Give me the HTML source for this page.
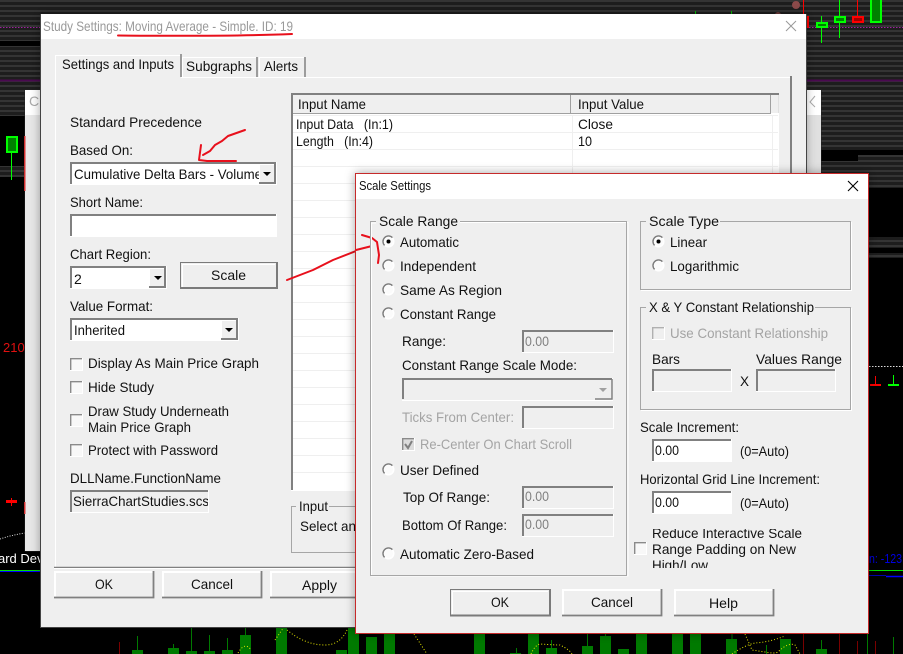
<!DOCTYPE html>
<html><head><meta charset="utf-8"><title>Scale Settings</title>
<style>
html,body{margin:0;padding:0;background:#000;overflow:hidden}
svg{display:block}
text{font-family:"Liberation Sans",sans-serif;font-size:14px;fill:#111}
.t13{font-size:13px}
.dis{fill:#a4a4a4}
.gr{fill:#808080}
.d{fill:none;stroke:#808080;stroke-width:2}
.l{fill:none;stroke:#fff;stroke-width:1}
.g{fill:none;stroke:#a6a6a6;stroke-width:1}
.gw{fill:none;stroke:#fff;stroke-width:1}
.btn{fill:#efefef}
.red{fill:none;stroke:#e8101c;stroke-width:2;stroke-linecap:round;stroke-linejoin:round}
.gb{fill:#007a00}
.gwk{stroke:#007a00;stroke-width:1;fill:none}
.rwk{stroke:#7a0000;stroke-width:1;fill:none}
.can{stroke:#00ff00;stroke-width:2;fill:#008000}
.canr{stroke:#ff0000;stroke-width:2;fill:#a00000}
</style></head>
<body>
<svg xmlns="http://www.w3.org/2000/svg" width="903" height="654" viewBox="0 0 903 654">
<defs>
<pattern id="st" width="4" height="5" patternUnits="userSpaceOnUse"><rect width="4" height="5" fill="#1d1d1d"/><rect y="0" width="4" height="2" fill="#343434"/></pattern>
<filter id="sh" x="-10%" y="-10%" width="120%" height="120%"><feDropShadow dx="0" dy="0" stdDeviation="5" flood-color="#000" flood-opacity=".35"/></filter>
<clipPath id="c1"><rect x="72" y="164" width="187" height="20"/></clipPath>
<clipPath id="c2"><rect x="72" y="492" width="136" height="20"/></clipPath>
<clipPath id="c3"><rect x="650" y="529" width="170" height="39"/></clipPath>
<g id="r"><circle r="6" fill="#fff"/><circle r="4.5" fill="#fbfbfb"/><path d="M-3.9 3.900A5.500 5.500 0 0 1 3.900 -3.900" stroke="#7c7c7c" stroke-width="1.400" fill="none"/></g>
<g id="c"><rect width="12" height="12" fill="#f8f8f8"/><path d="M.7 12V.7H12" stroke="#8a8a8a" stroke-width="1.400" fill="none"/><path d="M12.500 0V12.500H0" stroke="#fff" fill="none"/></g>
</defs>

<!-- chart background -->
<rect width="903" height="654" fill="#000"/>
<rect x="0" y="0" width="903" height="41" fill="url(#st)"/>
<rect x="0" y="46" width="40" height="70" fill="url(#st)"/>
<rect x="806" y="41" width="97" height="109" fill="url(#st)"/>
<rect x="858" y="155" width="45" height="33" fill="url(#st)"/>
<rect x="821" y="161" width="82" height="27" fill="url(#st)"/>
<rect x="868" y="237" width="35" height="11" fill="url(#st)"/>
<rect x="868" y="253" width="35" height="5" fill="url(#st)"/>
<rect x="0" y="166" width="25" height="11" fill="url(#st)"/>
<path d="M0 27.500H40M806 27.500H903" stroke="#a020a0" stroke-width="1" stroke-dasharray="1.500 1.500"/>
<path d="M0 80.500H40M806 80.500H903" stroke="#4a0a50" stroke-width="2"/>
<!-- left candle -->
<path d="M11.500 153V180" stroke="#00ff00" stroke-width="1"/>
<rect x="7" y="137" width="10" height="15" class="can"/>
<path d="M6 501.500H17" stroke="#ff0000" stroke-width="3" fill="none"/><path d="M11.500 498V506" stroke="#ff0000" fill="none"/>
<text x="3" y="352" style="font-size:13px;fill:#e01010">2109</text>
<path d="M0 539Q12 535 25 533" stroke="#ddd" stroke-width="1" stroke-dasharray="1 1.500" fill="none"/>
<text x="-2" y="563" style="fill:#fff;font-size:13px">ard Dev</text>
<path d="M0 570.500H40" stroke="#00e000" stroke-width="1"/><path d="M0 571.500H40" stroke="#0000ff" stroke-width="1"/>
<!-- top right candles -->
<circle cx="796" cy="5" r="4" fill="#8c4a4a"/>
<circle cx="778" cy="15" r="3" fill="#6c3a3a"/>
<path d="M695.500 11V14M731.500 11V14" stroke="#00c000"/>
<path d="M803.500 0V16" stroke="#ff0000"/><rect x="799" y="17" width="9" height="10" class="canr"/>
<path d="M821.500 16V43" stroke="#00ff00"/><rect x="817" y="23" width="10" height="4" class="can"/>
<path d="M839.500 0V38" stroke="#00ff00"/><rect x="835" y="17" width="10" height="5" class="can"/>
<path d="M857.500 0V16" stroke="#ff0000"/><rect x="853" y="17" width="10" height="5" class="canr"/>
<rect x="871" y="-2" width="10" height="24" class="can"/>
<!-- right side -->
<path d="M869 366.500H903" stroke="#ddd" stroke-dasharray="1.500 1.500"/>
<path d="M870 385H881" stroke="#ff0000" stroke-width="2"/><path d="M875.500 376V385" stroke="#ff0000"/>
<path d="M888 385H899" stroke="#00ff00" stroke-width="2"/><path d="M893.500 375V385" stroke="#00ff00"/>
<text x="869" y="563" textLength="36" lengthAdjust="spacingAndGlyphs" style="fill:#0000e0;font-size:13px">n: -123.</text>
<path d="M869 570.500H903" stroke="#00e000" stroke-width="1"/>
<path d="M869 575.500H886" stroke="#0000b0" stroke-width="1"/><path d="M886 576.500H903" stroke="#0000ff" stroke-width="1.500"/>
<!-- bottom bars -->
<g>
<rect class="gb" x="132" y="650" width="11" height="4"/><rect class="gb" x="168" y="648" width="11" height="6"/>
<rect class="gb" x="186" y="651" width="11" height="3"/><rect class="gb" x="204" y="651" width="11" height="3"/>
<rect class="gb" x="222" y="650" width="11" height="4"/><rect class="gb" x="240" y="635" width="11" height="19"/>
<rect class="gb" x="276" y="627" width="11" height="27"/><rect class="gb" x="336" y="650" width="11" height="4"/>
<rect class="gb" x="348" y="627" width="11" height="27"/>
<rect class="gb" x="366" y="637" width="11" height="17"/>
<rect class="gb" x="384" y="633" width="11" height="21"/><rect class="gb" x="474" y="633" width="11" height="21"/>
<rect class="gb" x="510" y="653" width="11" height="1"/><rect class="gb" x="528" y="634" width="11" height="20"/>
<rect class="gb" x="546" y="648" width="11" height="6"/><rect class="gb" x="582" y="646" width="11" height="8"/>
<rect class="gb" x="600" y="636" width="11" height="18"/><rect class="gb" x="618" y="649" width="11" height="5"/>
<rect class="gb" x="636" y="633" width="11" height="21"/><rect class="gb" x="672" y="633" width="11" height="21"/>
<rect class="gb" x="690" y="633" width="11" height="21"/><rect class="gb" x="726" y="639" width="11" height="15"/>
<rect class="gb" x="780" y="639" width="11" height="15"/><rect class="gb" x="816" y="649" width="11" height="5"/>
<path class="gwk" d="M137.500 636V650M173.500 644V648M191.500 627V651M209.500 635V651M227.500 638V650M245.500 627V635M516.500 648V654M551.500 640V648M587.500 633V646M605.500 633V636M732 633V640M766.500 645V654M821.500 640V649M867.500 634V654M893.500 637V654"/>
<path class="rwk" d="M119.500 642V654M803.500 634V654M839.500 634V654M857.500 641V654M875.500 641V654"/>
<path d="M238 653Q245 641 251 650M275 640L284 627M287 630Q305 645 325 645Q340 645 347 630M414 634L427 654M531 654Q535 645 540 644Q555 645 560 645Q570 650 572 654M732 654Q745 645 755 643Q770 642 785 636M745 634L752 650L765 652Q775 654 778 652Q788 642 795 645L800 654" stroke="#e8e800" stroke-width="1" stroke-dasharray="1 2" fill="none"/>
</g>

<!-- back dialog -->
<rect x="25" y="90" width="796" height="461" fill="#efefef" stroke="#222" stroke-width="1"/>
<rect x="25" y="90" width="796" height="25" fill="#fff"/>
<rect x="25" y="115" width="15" height="436" fill="#e8e8e8"/>
<rect x="806" y="115" width="15" height="436" fill="#e0e0e0"/>
<text x="29" y="106" style="fill:#aaa">Ch</text>
<path d="M815 96L810 102L815 107" stroke="#aaa" fill="none"/>
<rect x="24" y="136" width="1.500" height="55" fill="#d03030"/>
<rect x="24" y="502" width="1.500" height="12" fill="#d03030"/>

<!-- main dialog -->
<g filter="url(#sh)"><rect x="40" y="14" width="766" height="613" fill="#efefef"/></g>
<path d="M40.500 14V627.500H806.500V14" stroke="#444" fill="none"/>
<rect x="41" y="14" width="765" height="25" fill="#fff"/>
<text x="43" y="31" textLength="250" lengthAdjust="spacingAndGlyphs" style="fill:#999">Study Settings: Moving Average - Simple. ID: 19</text>
<path d="M786 21L796 31M796 21L786 31" stroke="#999" stroke-width="1" fill="none"/>

<!-- tab page -->
<path class="l" d="M55.500 567V77.500H791"/>
<path d="M791 76V567" stroke="#808080" stroke-width="2"/>
<path d="M54 567.500H791" stroke="#808080" stroke-width="1.500"/>
<path d="M791 568.500H54" stroke="#fff" stroke-width="1"/>
<!-- tabs -->
<rect x="56" y="55" width="125" height="24" fill="#efefef"/>
<path class="l" d="M55.500 78V55.500H180"/><path d="M181 54V77" stroke="#808080" stroke-width="1.500"/>
<path class="l" d="M182.500 77V57.500H256"/><path d="M257 57V77" stroke="#808080" stroke-width="1.500"/>
<path class="l" d="M259.500 77V57.500H304"/><path d="M305 57V77" stroke="#808080" stroke-width="1.500"/>
<text x="62" y="69" textLength="112" lengthAdjust="spacingAndGlyphs">Settings and Inputs</text>
<text x="186" y="71" textLength="66" lengthAdjust="spacingAndGlyphs">Subgraphs</text>
<text x="264" y="71" textLength="34" lengthAdjust="spacingAndGlyphs">Alerts</text>

<!-- left column -->
<text x="70" y="127" textLength="132" lengthAdjust="spacingAndGlyphs">Standard Precedence</text>
<text x="70" y="155" textLength="63" lengthAdjust="spacingAndGlyphs">Based On:</text>
<rect x="70" y="162" width="207" height="23" fill="#fff"/><path class="d" d="M71 185V163H276"/><path class="l" d="M276.500 162V184.500H70"/>
<text x="74" y="179" textLength="188" lengthAdjust="spacingAndGlyphs" clip-path="url(#c1)">Cumulative Delta Bars - Volume</text>
<rect x="259" y="164" width="16" height="20" fill="#efefef"/><path d="M259.500 183V164.500H274" stroke="#fff" fill="none"/><path class="d" d="M259 183H275V164"/><path d="M263 172H271L267 176Z" fill="#000"/>
<text x="70" y="207" textLength="73" lengthAdjust="spacingAndGlyphs">Short Name:</text>
<rect x="70" y="214" width="207" height="23" fill="#fff"/><path class="d" d="M71 237V215H276"/><path class="l" d="M276.500 214V236.500H70"/>
<text x="70" y="259" textLength="81" lengthAdjust="spacingAndGlyphs">Chart Region:</text>
<rect x="70" y="266" width="97" height="23" fill="#fff"/><path class="d" d="M71 289V267H166"/><path class="l" d="M166.500 266V288.500H70"/>
<text x="74" y="284">2</text>
<rect x="149" y="268" width="16" height="20" fill="#efefef"/><path d="M149.500 287V268.500H164" stroke="#fff" fill="none"/><path class="d" d="M149 287H165V268"/><path d="M154 276H162L158 280Z" fill="#000"/>
<rect x="180" y="262" width="97" height="27" fill="#efefef"/>
<path d="M180.500 288V262.500H277" stroke="#7a7a7a" fill="none"/><path d="M182 264.500H275M182.500 264V287" stroke="#fff" fill="none"/>
<path d="M180 288H277V262" stroke="#7a7a7a" stroke-width="2" fill="none"/>
<text x="211" y="280" textLength="35" lengthAdjust="spacingAndGlyphs">Scale</text>
<text x="70" y="311" textLength="83" lengthAdjust="spacingAndGlyphs">Value Format:</text>
<rect x="70" y="318" width="169" height="23" fill="#fff"/><path class="d" d="M71 341V319H238"/><path class="l" d="M238.500 318V340.500H70"/>
<text x="74" y="335" textLength="51" lengthAdjust="spacingAndGlyphs">Inherited</text>
<rect x="221" y="320" width="16" height="20" fill="#efefef"/><path d="M221.500 339V320.500H236" stroke="#fff" fill="none"/><path class="d" d="M221 339H237V320"/><path d="M225 328H233L229 332Z" fill="#000"/>

<use href="#c" x="70" y="358"/>
<text x="88" y="368" textLength="171" lengthAdjust="spacingAndGlyphs">Display As Main Price Graph</text>
<use href="#c" x="70" y="381"/>
<text x="88" y="392" textLength="66" lengthAdjust="spacingAndGlyphs">Hide Study</text>
<use href="#c" x="70" y="414"/>
<text x="88" y="416" textLength="141" lengthAdjust="spacingAndGlyphs">Draw Study Underneath</text>
<text x="88" y="432" textLength="103" lengthAdjust="spacingAndGlyphs">Main Price Graph</text>
<use href="#c" x="70" y="444"/>
<text x="88" y="455" textLength="130" lengthAdjust="spacingAndGlyphs">Protect with Password</text>
<text x="70" y="483" textLength="151" lengthAdjust="spacingAndGlyphs">DLLName.FunctionName</text>
<rect x="70" y="490" width="139" height="23" fill="#efefef"/><path class="d" d="M71 513V491H208"/><path class="l" d="M208.500 490V512.500H70"/>
<text x="73" y="506" textLength="136" lengthAdjust="spacingAndGlyphs" clip-path="url(#c2)">SierraChartStudies.scs</text>

<!-- grid -->
<rect x="291" y="93" width="488" height="398" fill="#fff"/>
<rect x="293" y="95" width="485" height="18" fill="#efefef"/>
<path d="M291 94H779" stroke="#808080" stroke-width="2"/>
<path d="M292 93V491" stroke="#808080" stroke-width="2"/>
<path d="M293 113.500H771" stroke="#a0a0a0"/>
<path d="M570.500 95V113M770.500 95V113" stroke="#a0a0a0"/>
<path d="M778.500 95V113" stroke="#e0e0e0"/>
<path d="M293 115.500H778M293 132.500H778M293 149.500H778M293 166.500H778M293 183.500H778M293 200.500H778M293 217.500H778M293 234.500H778M293 251.500H778M293 268.500H778M293 285.500H778M293 302.500H778M293 319.500H778M293 336.500H778M293 353.500H778M293 370.500H778M293 387.500H778M293 404.500H778M293 421.500H778M293 438.500H778M293 455.500H778M293 472.500H778" stroke="#efefef"/>
<path d="M572.500 115V490M772.500 115V490" stroke="#efefef"/>
<path d="M291 490.500H779" stroke="#fff"/>
<text x="298" y="109" textLength="68" lengthAdjust="spacingAndGlyphs">Input Name</text>
<text x="578" y="109" textLength="66" lengthAdjust="spacingAndGlyphs">Input Value</text>
<text x="296" y="129" textLength="97" lengthAdjust="spacingAndGlyphs" xml:space="preserve">Input Data   (In:1)</text>
<text x="578" y="129" textLength="35" lengthAdjust="spacingAndGlyphs">Close</text>
<text x="296" y="146" textLength="77" lengthAdjust="spacingAndGlyphs" xml:space="preserve">Length   (In:4)</text>
<text x="578" y="146" textLength="14" lengthAdjust="spacingAndGlyphs">10</text>

<path class="g" d="M296 506.500H291.500V552.500H360"/>
<path class="g" d="M329 506.500H360"/>
<text x="299" y="511" textLength="29" lengthAdjust="spacingAndGlyphs">Input</text>
<text x="300" y="531" textLength="56" lengthAdjust="spacingAndGlyphs">Select an</text>

<!-- bottom buttons -->
<rect x="54" y="571" width="99" height="27" class="btn"/><path d="M55 598V572H153" stroke="#fff" stroke-width="2" fill="none"/><path d="M54 597.500H153.500V571" stroke="#808080" stroke-width="1.800" fill="none"/>
<text x="95" y="589" textLength="18" lengthAdjust="spacingAndGlyphs">OK</text>
<rect x="162" y="571" width="99" height="27" class="btn"/><path d="M163 598V572H261" stroke="#fff" stroke-width="2" fill="none"/><path d="M162 597.500H261.500V571" stroke="#808080" stroke-width="1.800" fill="none"/>
<text x="191" y="589" textLength="42" lengthAdjust="spacingAndGlyphs">Cancel</text>
<rect x="270" y="571" width="99" height="27" class="btn"/><path d="M271 598V572H369" stroke="#fff" stroke-width="2" fill="none"/><path d="M270 597.500H369" stroke="#808080" stroke-width="1.800" fill="none"/>
<text x="302" y="590" textLength="35" lengthAdjust="spacingAndGlyphs">Apply</text>

<!-- annotations under scale dialog -->
<path class="red" d="M118 35.500C170 36 240 36 292 34"/>
<path class="red" d="M245 130L228 136L222 141L215 145L210 151L203 155M201 145L199 160L207 161L236 161"/>
<path class="red" d="M287 280L313 270L333 260L356 251"/>

<!-- scale dialog -->
<g filter="url(#sh)"><rect x="355.500" y="173.500" width="513" height="460" fill="#efefef" stroke="#c62a2a"/></g>
<rect x="356" y="174" width="512" height="25" fill="#fff"/>
<text x="359" y="190" class="t13" textLength="72" lengthAdjust="spacingAndGlyphs">Scale Settings</text>
<path d="M848 181L858 191M858 181L848 191" stroke="#000" stroke-width="1.100" fill="none"/>

<path class="red" d="M356 250L370 246.500M362 235L372 238L377 242L379 255L378 263"/>

<!-- scale range group -->
<path class="gw" d="M372 223H376M371.500 575.500V222.500M628 222.500H460M628 222V576H371"/>
<path class="g" d="M376 221.500H370.500V575.500H626.500V221.500H460"/>
<text x="379" y="226" textLength="79" lengthAdjust="spacingAndGlyphs">Scale Range</text>
<use href="#r" x="388.500" y="241.500"/><circle cx="388.500" cy="241.500" r="2" fill="#000"/>
<text x="400" y="247" textLength="59" lengthAdjust="spacingAndGlyphs">Automatic</text>
<use href="#r" x="388.500" y="265.500"/>
<text x="400" y="271" textLength="76" lengthAdjust="spacingAndGlyphs">Independent</text>
<use href="#r" x="388.500" y="289.500"/>
<text x="400" y="295" textLength="102" lengthAdjust="spacingAndGlyphs">Same As Region</text>
<use href="#r" x="388.500" y="313.500"/>
<text x="400" y="319" textLength="96" lengthAdjust="spacingAndGlyphs">Constant Range</text>
<text x="402" y="346" textLength="44" lengthAdjust="spacingAndGlyphs">Range:</text>
<path class="d" d="M523 352V331H613"/><path class="l" d="M613.500 330V352.500H522"/>
<text x="525" y="346" textLength="24" lengthAdjust="spacingAndGlyphs" class="gr">0.00</text>
<text x="402" y="370" textLength="175" lengthAdjust="spacingAndGlyphs">Constant Range Scale Mode:</text>
<path class="d" d="M403 399V379H612"/><path class="l" d="M612.500 378V400.500H402"/>
<rect x="595" y="380" width="16" height="19" fill="#efefef"/><path d="M595 399H612V379" stroke="#808080" stroke-width="1.500" fill="none"/><path d="M599 388H607L603 392Z" fill="#a0a0a0"/>
<text x="402" y="422" textLength="112" lengthAdjust="spacingAndGlyphs" class="dis">Ticks From Center:</text>
<path class="d" d="M523 428V407H613"/><path class="l" d="M613.500 406V428.500H522"/>
<rect x="402" y="438" width="12" height="12" fill="#dcdcdc"/><path d="M402.700 450V438.700H414" stroke="#8a8a8a" stroke-width="1.400" fill="none"/><path d="M414.500 438V450.500H402" stroke="#fff" fill="none"/><path d="M405 444L408 448L412 441" stroke="#808080" stroke-width="2" fill="none"/>
<text x="420" y="449" textLength="152" lengthAdjust="spacingAndGlyphs" class="dis">Re-Center On Chart Scroll</text>
<use href="#r" x="388.500" y="469.500"/>
<text x="400" y="475" textLength="79" lengthAdjust="spacingAndGlyphs">User Defined</text>
<text x="403" y="502" textLength="87" lengthAdjust="spacingAndGlyphs">Top Of Range:</text>
<path class="d" d="M523 508V487H613"/><path class="l" d="M613.500 486V508.500H522"/>
<text x="525" y="501" textLength="24" lengthAdjust="spacingAndGlyphs" class="gr">0.00</text>
<text x="402" y="530" textLength="105" lengthAdjust="spacingAndGlyphs">Bottom Of Range:</text>
<path class="d" d="M523 536V515H613"/><path class="l" d="M613.500 514V536.500H522"/>
<text x="525" y="529" textLength="24" lengthAdjust="spacingAndGlyphs" class="gr">0.00</text>
<use href="#r" x="388.500" y="553.500"/>
<text x="400" y="559" textLength="134" lengthAdjust="spacingAndGlyphs">Automatic Zero-Based</text>

<!-- scale type -->
<path class="g" d="M646 221.500H640.500V289.500H850.500V221.500H720"/>
<path class="gw" d="M641 290.500H851.500V222"/>
<text x="649" y="226" textLength="70" lengthAdjust="spacingAndGlyphs">Scale Type</text>
<use href="#r" x="658.500" y="241.500"/><circle cx="658.500" cy="241.500" r="2" fill="#000"/>
<text x="670" y="247" textLength="37" lengthAdjust="spacingAndGlyphs">Linear</text>
<use href="#r" x="658.500" y="265.500"/>
<text x="670" y="271" textLength="69" lengthAdjust="spacingAndGlyphs">Logarithmic</text>

<!-- X&Y -->
<path class="g" d="M646 307.500H640.500V409.500H850.500V307.500H815"/>
<path class="gw" d="M641 410.500H851.500V308"/>
<text x="649" y="312" textLength="165" lengthAdjust="spacingAndGlyphs">X &amp; Y Constant Relationship</text>
<rect x="652" y="327" width="12" height="12" fill="#efefef"/><path d="M652.700 339V327.700H664" stroke="#b0b0b0" stroke-width="1.400" fill="none"/><path d="M664.500 327V339.500H652" stroke="#fff" fill="none"/>
<text x="670" y="338" textLength="158" lengthAdjust="spacingAndGlyphs" class="dis">Use Constant Relationship</text>
<text x="652" y="364" textLength="28" lengthAdjust="spacingAndGlyphs">Bars</text>
<text x="756" y="364" textLength="86" lengthAdjust="spacingAndGlyphs">Values Range</text>
<path class="d" d="M653 391V370H731"/><path class="l" d="M731.500 369V391.500H652"/>
<text x="740" y="386" textLength="9" lengthAdjust="spacingAndGlyphs">X</text>
<path class="d" d="M757 391V370H835"/><path class="l" d="M835.500 369V391.500H756"/>

<text x="640" y="432" textLength="99" lengthAdjust="spacingAndGlyphs">Scale Increment:</text>
<rect x="652" y="439" width="80" height="23" fill="#fff"/><path class="d" d="M653 461V440H731"/><path class="l" d="M731.500 439V461.500H652"/>
<text x="655" y="455" textLength="24" lengthAdjust="spacingAndGlyphs">0.00</text>
<text x="740" y="456" textLength="49" lengthAdjust="spacingAndGlyphs">(0=Auto)</text>
<text x="640" y="484" textLength="180" lengthAdjust="spacingAndGlyphs">Horizontal Grid Line Increment:</text>
<rect x="652" y="491" width="80" height="23" fill="#fff"/><path class="d" d="M653 513V492H731"/><path class="l" d="M731.500 491V513.500H652"/>
<text x="655" y="507" textLength="24" lengthAdjust="spacingAndGlyphs">0.00</text>
<text x="740" y="508" textLength="49" lengthAdjust="spacingAndGlyphs">(0=Auto)</text>
<use href="#c" x="634" y="542"/>
<g clip-path="url(#c3)">
<text x="652" y="538" textLength="150" lengthAdjust="spacingAndGlyphs">Reduce Interactive Scale</text>
<text x="652" y="554" textLength="144" lengthAdjust="spacingAndGlyphs">Range Padding on New</text>
<text x="652" y="570" textLength="56" lengthAdjust="spacingAndGlyphs">High/Low</text>
</g>

<!-- scale buttons -->
<rect x="450" y="589" width="100" height="27" class="btn"/>
<path d="M450.500 616V589.500H550" stroke="#7a7a7a" fill="none"/><path d="M452 591.500H548M452.500 591V614" stroke="#fff" fill="none"/>
<path d="M450 615.500H550V589" stroke="#7a7a7a" stroke-width="2" fill="none"/>
<text x="491" y="607" textLength="18" lengthAdjust="spacingAndGlyphs">OK</text>
<rect x="562" y="589" width="99" height="27" class="btn"/><path d="M563 616V590H661" stroke="#fff" stroke-width="2" fill="none"/><path d="M562 615.500H661.500V589" stroke="#808080" stroke-width="1.800" fill="none"/>
<text x="591" y="607" textLength="42" lengthAdjust="spacingAndGlyphs">Cancel</text>
<rect x="674" y="589" width="99" height="27" class="btn"/><path d="M675 616V590H773" stroke="#fff" stroke-width="2" fill="none"/><path d="M674 615.500H773.500V589" stroke="#808080" stroke-width="1.800" fill="none"/>
<text x="709" y="608" textLength="29" lengthAdjust="spacingAndGlyphs">Help</text>
</svg>
</body></html>
